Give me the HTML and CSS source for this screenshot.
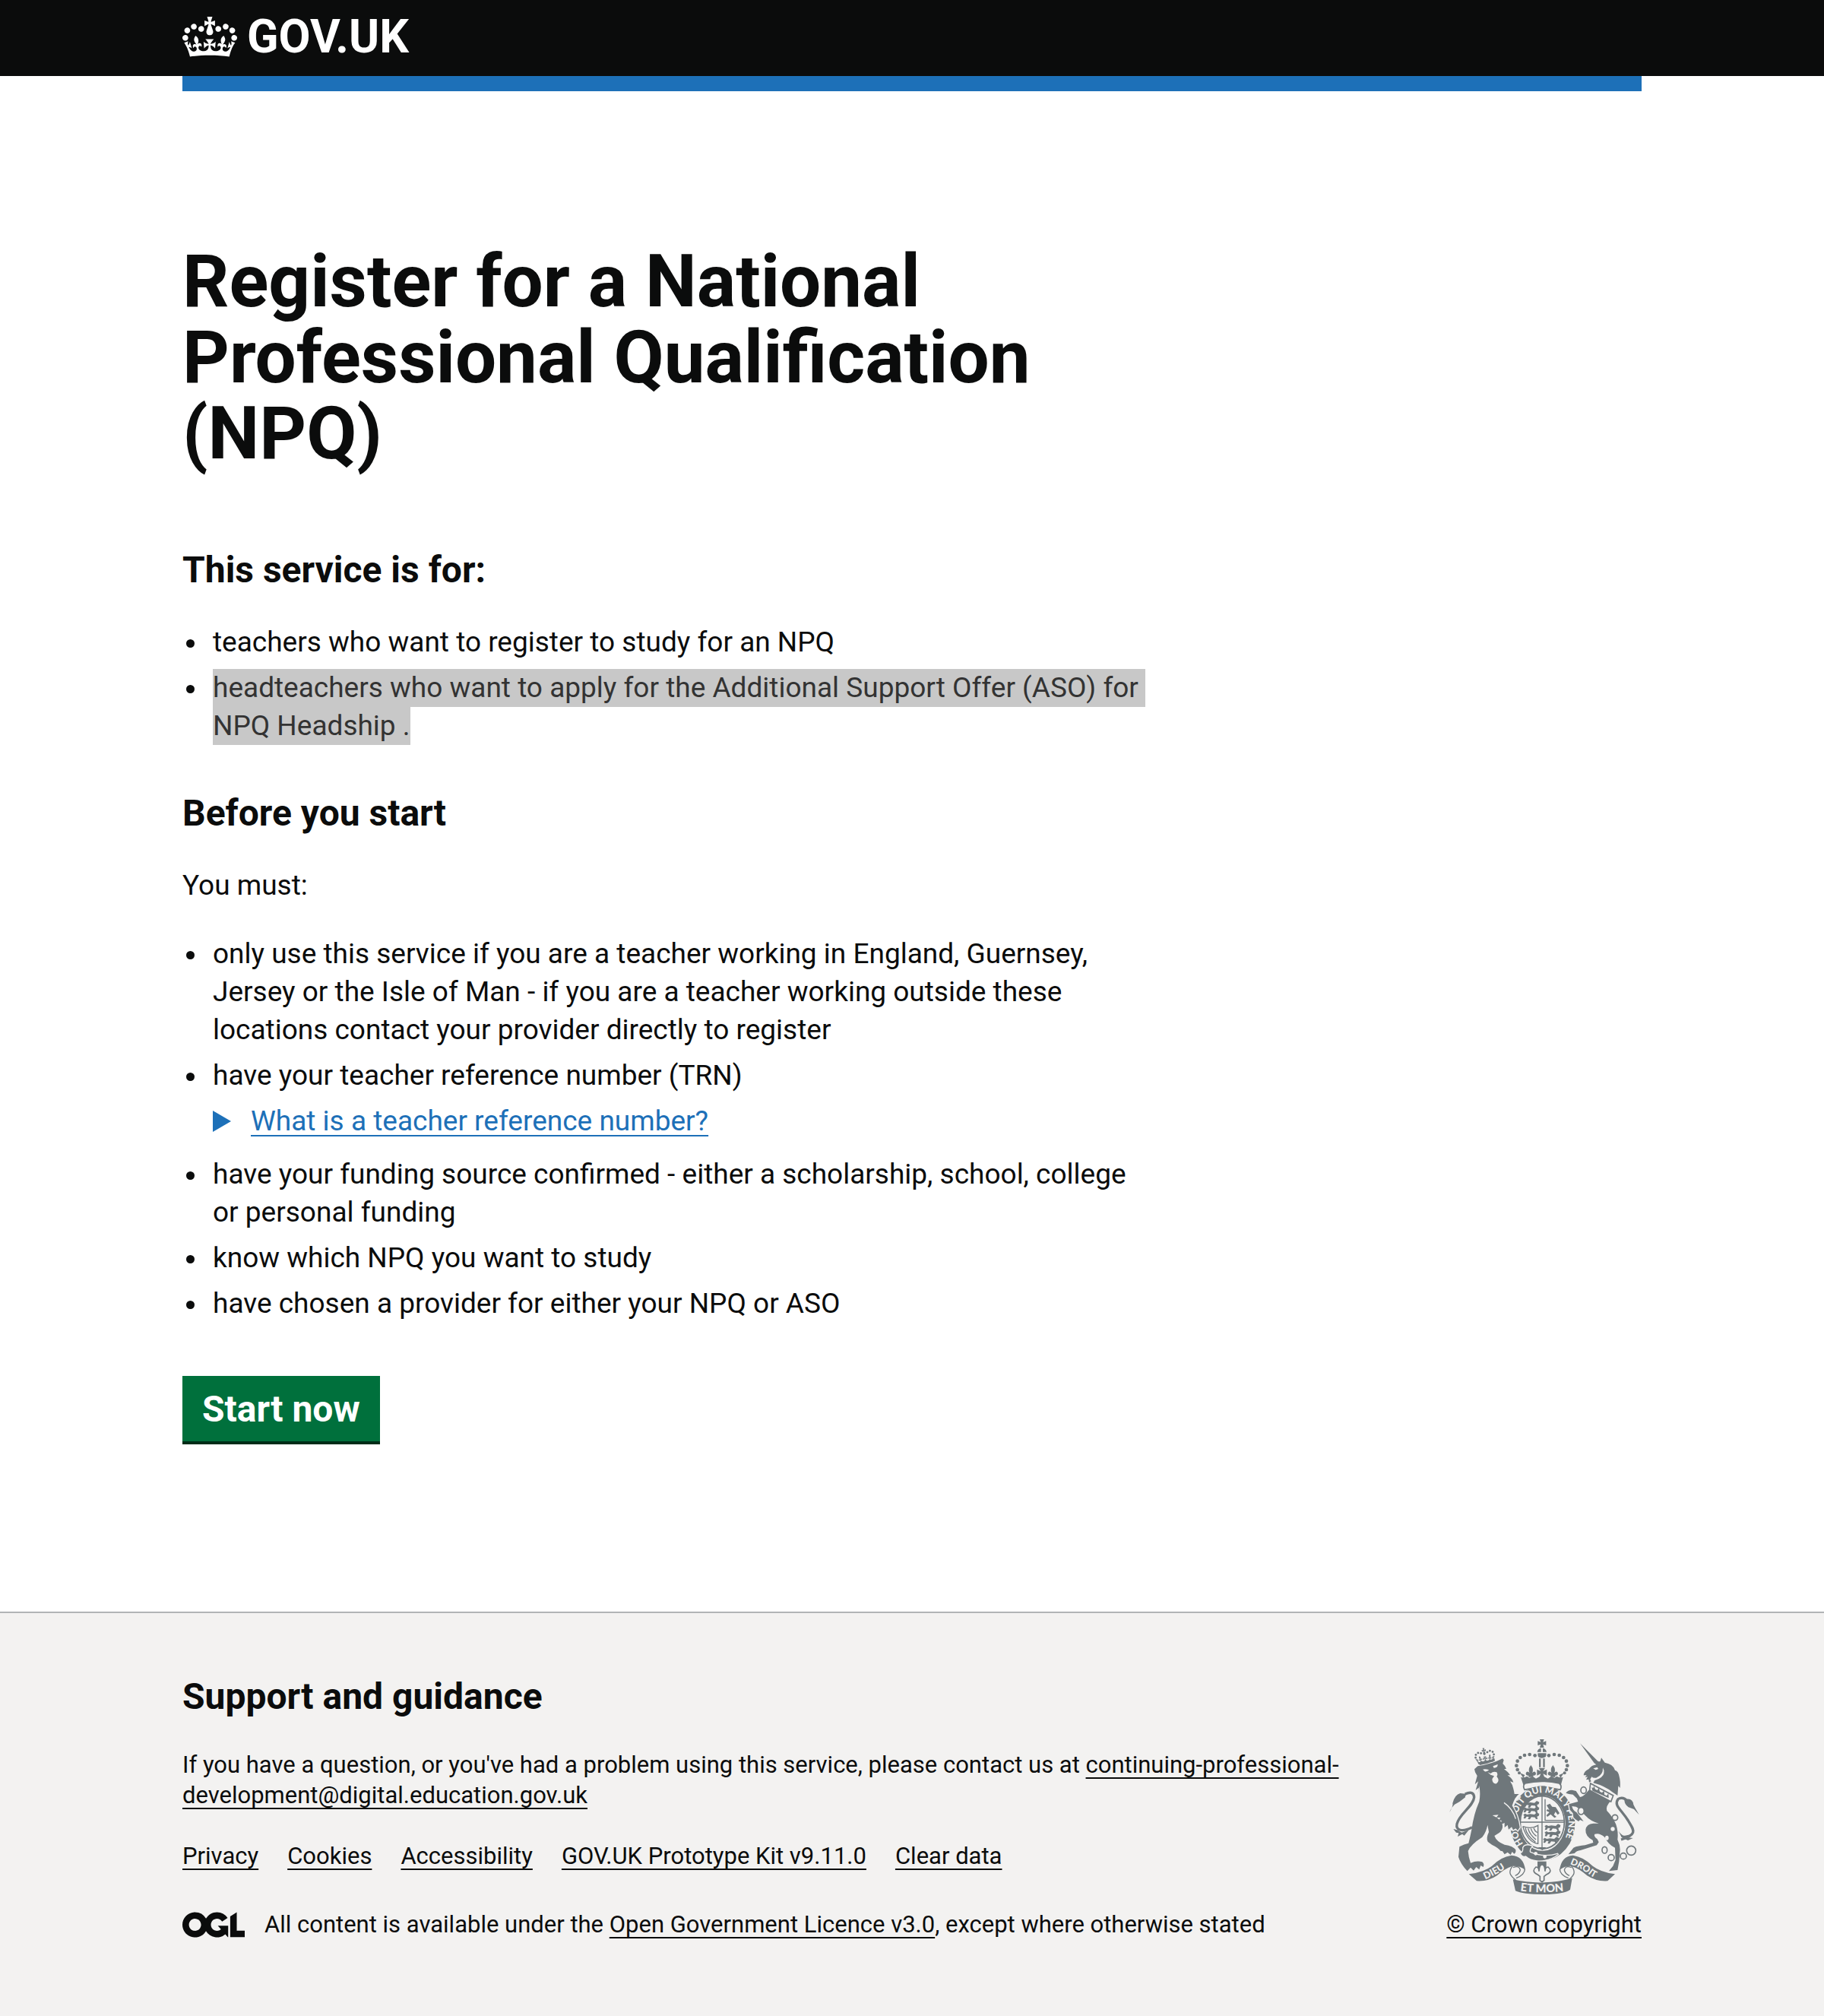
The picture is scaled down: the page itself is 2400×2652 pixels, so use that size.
FILE: index.html
```html
<!DOCTYPE html>
<html lang="en">
<head>
<meta charset="utf-8">
<meta name="viewport" content="width=device-width, initial-scale=1">
<title>Register for a National Professional Qualification (NPQ)</title>
<link rel="stylesheet" href="styles.css">
</head>
<body>
<header class="header">
  <div class="container">
    <div class="header-inner">
      <a class="logo" href="#">
        <svg class="logo-crown" viewBox="0 0 132 97" aria-hidden="true"><path id="crown-mark" fill="currentColor" fill-rule="evenodd" d="M25 30.2c3.5 1.5 7.7-.2 9.1-3.7 1.5-3.6-.2-7.8-3.9-9.2-3.6-1.4-7.6.3-9.1 3.9-1.4 3.5.3 7.5 3.9 9zM9 39.5c3.6 1.5 7.8-.2 9.2-3.7 1.5-3.6-.2-7.8-3.9-9.1-3.6-1.5-7.6.2-9.1 3.8-1.4 3.5.3 7.5 3.8 9zM4.4 57.2c3.5 1.5 7.7-.2 9.1-3.8 1.5-3.6-.2-7.7-3.9-9.1-3.5-1.5-7.6.3-9.1 3.8-1.4 3.5.3 7.6 3.9 9.1zm38.3-21.4c3.5 1.5 7.7-.2 9.1-3.8 1.5-3.6-.2-7.7-3.9-9.1-3.6-1.5-7.6.3-9.1 3.8-1.3 3.6.4 7.7 3.9 9.1zm64.4-5.6c-3.6 1.5-7.8-.2-9.1-3.7-1.5-3.6.2-7.8 3.8-9.2 3.6-1.4 7.7.3 9.2 3.9 1.3 3.5-.4 7.5-3.9 9zm15.9 9.3c-3.6 1.5-7.7-.2-9.1-3.7-1.5-3.6.2-7.8 3.7-9.1 3.6-1.5 7.7.2 9.2 3.8 1.5 3.5-.3 7.5-3.8 9zm4.7 17.7c-3.6 1.5-7.8-.2-9.2-3.8-1.5-3.6.2-7.7 3.9-9.1 3.6-1.5 7.7.3 9.2 3.8 1.3 3.5-.4 7.6-3.9 9.1zM89.3 35.8c-3.6 1.5-7.8-.2-9.2-3.8-1.4-3.6.2-7.7 3.9-9.1 3.6-1.5 7.7.3 9.2 3.8 1.4 3.6-.3 7.7-3.9 9.1zM69.7 17.7l8.9 4.7V9.3l-8.9 2.8c-.2-.3-.5-.6-.9-.9L72.4 0H59.6l3.5 11.2c-.3.3-.6.5-.9.9l-8.8-2.8v13.1l8.8-4.7c.3.3.6.7.9.9l-5 15.4v.1c-.2.8-.4 1.6-.4 2.4 0 4.1 3.1 7.5 7 8.1h.2c.3 0 .7.1 1 .1.4 0 .7 0 1-.1h.2c4-.6 7.1-4.1 7.1-8.1 0-.8-.1-1.7-.4-2.4V34l-5.1-15.4c.4-.2.7-.6 1-.9zM66 92.8c16.9 0 32.8 1.1 47.1 3.2 4-16.9 8.9-26.7 14-33.5l-9.6-3.4c1 4.9 1.1 7.2 0 10.2-1.5-1.4-3-4.3-4.2-8.7L108.6 76c2.8-2 5-3.2 7.5-3.3-4.4 9.4-10 11.9-13.6 11.2-4.3-.8-6.3-4.6-5.6-7.9 1-4.7 5.7-5.9 8-.5 4.3-8.7-3-11.4-7.6-8.8 7.1-7.2 7.9-13.5 2.1-21.1-8 6.1-8.1 12.3-4.5 20.8-4.7-5.4-12.1-2.5-9.5 6.2 3.4-5.2 7.9-2 7.2 3.1-.6 4.3-6.4 7.8-13.5 7.2-10.3-.9-10.9-8-11.2-13.8 2.5-.5 7.1 1.8 11 7.3L80.2 60c-4.1 4.4-8 5.3-12.3 5.4 1.4-4.4 8-11.6 8-11.6H55.5s6.4 7.2 7.9 11.6c-4.2-.1-8-1-12.3-5.4l1.4 16.4c3.9-5.5 8.5-7.7 10.9-7.3-.3 5.8-.9 12.8-11.1 13.8-7.2.6-12.9-2.9-13.5-7.2-.7-5 3.8-8.3 7.1-3.1 2.7-8.7-4.6-11.6-9.4-6.2 3.7-8.5 3.6-14.7-4.6-20.8-5.8 7.6-5 13.9 2.2 21.1-4.7-2.6-11.9.1-7.7 8.8 2.3-5.5 7.1-4.2 8.1.5.7 3.3-1.3 7.1-5.7 7.9-3.5.7-9-1.8-13.5-11.2 2.5.1 4.7 1.3 7.5 3.3l-4.7-15.4c-1.2 4.4-2.7 7.2-4.3 8.7-1.1-3-.9-5.3 0-10.2l-9.5 3.4c5 6.9 9.9 16.7 14 33.5 14.8-2.1 30.8-3.2 47.7-3.2z"/></svg>
        <span>GOV.UK</span>
      </a>
    </div>
  </div>
</header>

<div class="container">
  <div class="brand-bar"></div>
  <main class="main">
    <h1 class="title">Register for a National Professional Qualification (NPQ)</h1>

    <h2 class="heading">This service is for:</h2>
    <ul class="list">
      <li>teachers who want to register to study for an NPQ</li>
      <li><mark class="selected">headteachers who want to apply for the Additional Support Offer (ASO) for NPQ Headship .</mark></li>
    </ul>

    <h2 class="heading heading-spaced">Before you start</h2>
    <p class="body">You must:</p>
    <ul class="list">
      <li>only use this service if you are a teacher working in England, Guernsey, Jersey or the Isle of Man - if you are a teacher working outside these locations contact your provider directly to register</li>
      <li>have your teacher reference number (TRN)
        <details class="details">
          <summary class="summary"><span>What is a teacher reference number?</span></summary>
        </details>
      </li>
      <li>have your funding source confirmed - either a scholarship, school, college or personal funding</li>
      <li>know which NPQ you want to study</li>
      <li>have chosen a provider for either your NPQ or ASO</li>
    </ul>
    <button class="button" type="button">Start now</button>
  </main>
</div>

<footer class="footer">
  <div class="container footer-row">
    <div class="footer-text">
      <h2 class="heading">Support and guidance</h2>
      <p class="footer-body">If you have a question, or you've had a problem using this service, please contact us at <a href="#">continuing-professional-development@digital.education.gov.uk</a></p>
      <ul class="footer-links">
        <li><a href="#">Privacy</a></li>
        <li><a href="#">Cookies</a></li>
        <li><a href="#">Accessibility</a></li>
        <li><a href="#">GOV.UK Prototype Kit v9.11.0</a></li>
        <li><a href="#">Clear data</a></li>
      </ul>
      <div class="licence">
        <svg class="ogl" viewBox="0 0 483.2 195.7" role="img" aria-label="OGL"><path fill="currentColor" d="M421.5 142.8V.1l-50.7 32.3v161.1h112.4v-50.7zm-122.3-9.6A47.12 47.12 0 0 1 221 97.8c0-26 21.1-47.1 47.1-47.1 16.7 0 31.4 8.7 39.7 21.8l42.7-27.2A97.63 97.63 0 0 0 268.1 0c-36.5 0-68.3 20.1-85.1 49.7A98 98 0 0 0 97.8 0C43.9 0 0 43.9 0 97.8s43.9 97.8 97.8 97.8c36.5 0 68.3-20.1 85.1-49.7a97.76 97.76 0 0 0 149.6 25.4l19.4 22.2h3v-87.8h-80l24.3 27.5zM97.8 145c-26 0-47.1-21.1-47.1-47.1s21.1-47.1 47.1-47.1 47.1 21.1 47.1 47.1S123.8 145 97.8 145"/></svg>
        <span>All content is available under the <a href="#">Open Government Licence v3.0</a>, except where otherwise stated</span>
      </div>
    </div>
    <a class="copyright" href="#">
      <svg class="crest" viewBox="132 84 750 612" aria-hidden="true">
        <defs>
          <path id="garter-line" d="M424 496A103 120 0 1 1 566 507"/>
          <path id="dieu-line" d="M274 637Q332 612 382 572"/>
          <path id="mon-line" d="M412 682Q498 694 592 682"/>
          <path id="droit-line" d="M608 576Q660 596 690 622Q712 636 742 640"/>
          <path id="fleur" d="M0-26Q13-10 5 4Q16-6 20 6Q20 16 9 15L9 21H-9V15Q-20 16-20 6Q-16-6-5 4Q-13-10 0-26Z"/>
          <path id="passant" d="M-32-8l7-5 8 4 12-2 17 2 9-8 10 5-2 8-7 3 3 9-7 1-4-7-14-1-6 9-8-1 4-9-9-1-5 8-7-1 3-9z"/>
          <g id="half-crown">
            <circle cx="470" cy="148" r="7"/><circle cx="449" cy="144" r="7"/><circle cx="429" cy="147" r="7"/><circle cx="412" cy="156" r="7"/><circle cx="401" cy="170" r="7"/><circle cx="397" cy="188" r="7"/><circle cx="401" cy="204" r="7"/><circle cx="408" cy="217" r="6"/>
            <use href="#fleur" x="454" y="212"/>
            <path d="M411 217l19 8-6 12zM486 160h7v34h-7z"/>
          </g>
        </defs>
        <g class="crest-solid">
          <path d="M489 84h17l-4 11 12-4v17l-12-4 4 13h-17l4-13-12 4V91l12 4zM479 134q2-14 15-15v15zM501 119q13 1 15 15h-15zM482 139h32q5 18-17 19q-20-1-15-19z"/>
          <use href="#half-crown"/><use href="#half-crown" transform="translate(995 0) scale(-1 1)"/>
          <path d="M485 197h25l-8 13 15-7v24l-15-7 6 15h-21l6-15-15 7v-24l15 7z"/>
          <path d="M414 233q10 5 25-3l8 6 15-5 12 8 15-8 16 0 16 8 12-8 15 5 8-6q15 8 25 3l-9 33q-74-22-147 0z"/>
        </g>
        <path class="crest-open" d="M431 258q67-16 135 0 12 10 4 25-70-18-141 0-9-16 2-25z"/>
        <ellipse class="crest-ring" cx="500" cy="415" rx="109" ry="128"/>
        <ellipse class="crest-open" cx="499" cy="412" rx="87" ry="104"/>
        <g class="crest-solid">
          <use href="#passant" transform="translate(456 344)"/><use href="#passant" transform="translate(456 366)"/><use href="#passant" transform="translate(456 390)"/>
          <use href="#passant" transform="translate(540 435)"/><use href="#passant" transform="translate(540 460)"/><use href="#passant" transform="translate(534 486)"/>
          <path d="M516 344l13-6 9 12 14 2 15 24-7 6-9-12-6 12 10 8-8 4-15-14-13 10-4-6 12-12-12-6 4-6 8 3z"/>
          <path d="M481 510h34l-16 12z"/>
        </g>
        <path class="crest-thin" d="M422 428q35 12 60-4v72q-40-5-60-68M432 434q5 30 40 56M443 436q6 24 31 44M454 436q5 18 22 30M465 434q4 12 14 18M510 320v84h74M498 308v208M411 411h177"/>
        <text class="crest-letters" font-size="36"><textPath href="#garter-line">HONI SOIT QUI MAL Y PENSE</textPath></text>
        <path class="crest-paw" d="M424 512q8-16 34-6-12 12-8 24 54 24 112 6-34 28-84 26-26-2-44-18-14 4-20-10 12-4 10-22z"/>
        <path class="crest-paw" d="M231 202L244 190Q300 182 342 160L347 166L343 180Q352 188 357 200L348 202Q366 214 372 226L362 226Q382 240 385 254L372 250Q382 264 384 276Q388 290 389 300L407 300Q390 312 380 346Q404 385 410 432L402 444L394 436L384 442L378 430L366 440L362 422L350 432L350 414L336 420L338 404L326 404L334 394L318 392L326 382L302 384Q335 398 342 422Q344 440 330 452L310 465Q318 488 350 500Q385 505 394 520Q396 532 388 536L380 528L374 540L362 530L350 538L342 526L334 524Q325 512 300 500L284 488Q276 475 288 450L283 422Q278 450 262 470Q215 500 206 525Q208 550 216 572Q240 562 262 568Q272 576 266 588L256 582L250 598L238 588L228 602L216 590L203 604Q176 575 168 548L172 508Q190 498 208 494Q214 470 220 440Q228 380 250 330Q256 300 250 268L244 305L248 275L236 285L246 250L233 262L242 228L234 214Z"/>
        <path class="crest-paw" d="M683 284L770 326Q748 348 754 366Q776 388 790 420Q800 450 796 480Q806 500 806 520L802 566L796 600L762 604L778 584L788 560L786 512Q760 500 745 470Q725 452 706 458Q700 465 716 478L722 490L714 502L650 522Q634 524 626 534L602 538L622 512Q640 504 668 502L700 492L698 482Q668 466 670 440Q674 418 700 416L722 416Q690 408 668 384Q640 352 632 350L616 348Q620 366 634 372L650 392L662 408L648 402L642 408L630 400L622 392L620 376L608 362L604 340L640 330L636 318L620 302L604 300L592 296Q600 284 616 284L632 288L648 312Q660 310 672 296Z"/>
        <g class="crest-solid">
          <path d="M133 372q15-26 12-36 9-34 30-39l29 3q-11 6-9 13-20 18-42 28-17 18-20 31z"/>
          <path class="crest-line" d="M194 300q35-15 36 13c-3 35-60 66-68 105c-5 25 20 34 60 13"/>
          <path d="M148 438l15 4 18 10 28-10-18 22-8-6-18 10 4-14-10-2z"/>
          <use href="#crown-mark" color="#6f777b" transform="translate(226 126) rotate(-10) scale(.62)"/>
          <path d="M248 176q34-4 62-17l2 10q-28 12-60 17z"/>
          <path d="M648 100L716 168Q722 174 728 170L732 157L746 176Q780 182 786 206Q800 210 803 232Q808 250 806 276L799 268L796 306L775 292Q745 268 700 256L706 246Q740 235 742 218Q744 205 738 196Q740 225 712 236Q700 238 694 232L688 242L692 250L684 254L682 242L672 244L678 232L668 234L674 226L662 226Q664 210 682 202Q694 186 712 184L704 178Z"/>
          <path class="crest-line" d="M810 480C880 458 858 440 838 405C810 360 780 345 798 320Q818 308 837 330"/>
          <path d="M831 320q25-4 28 22l6 12 16 28-20-22-22-8q-15-10-16-28zM800 446q14 20 25 18l30-6-16 14 18 2-20 9-25-12z"/>
          <path d="M209 616Q270 608 300 584Q335 548 377 542Q425 544 432 600Q415 584 382 584Q350 594 320 622Q285 646 240 643ZM786 616Q728 608 698 584Q662 548 620 542Q575 544 567 600Q585 584 612 584Q646 594 676 622Q712 646 757 643ZM383 637q114 27 234-5l-8 45q-25 19-109 19-79 0-107-14z"/>
          <path class="crest-thin" d="M382 584c-20 26-9 38 12 56M430 596q0 22-34 36M614 584c20 26 9 38-12 56M568 596q0 22 34 36M384 590q24-10 28 10q-4 16-20 22M614 590q-24-10-28 10q4 16 20 22"/>
          <path d="M480 566h35v32h-35z"/>
        </g>
        <g class="crest-open">
          <path d="M474 588q12 0 12 17 1-25 12-27 11 2 12 27 0-17 12-17 20 18-7 30l-9 7v16l-8 6-8-6v-16l-9-7q-27-12-7-30z"/>
          <ellipse cx="662" cy="285" rx="11" ry="13"/><ellipse cx="652" cy="367" rx="12" ry="14"/><circle cx="786" cy="393" r="11"/><ellipse cx="745" cy="521" rx="10" ry="13"/><circle cx="771" cy="551" r="12"/><circle cx="819" cy="545" r="12"/><circle cx="850" cy="523" r="18"/>
          <path d="M689 258l90 48-9 24-84-45z"/>
        </g>
        <g class="crest-light">
          <circle cx="473" cy="535" r="7"/><circle cx="509" cy="547" r="7"/><ellipse cx="777" cy="438" rx="8" ry="8"/><ellipse cx="754" cy="473" rx="7" ry="9"/>
          <path d="M264 203q10-4 25 2-8 8-17 6zM304 190l19-7q1 13-15 14zM283 214l12 5q12-11 24-5 6 9 0 16 14 18-1 29-16 2-17-18l8-12-14-5zM700 199l16-5 4 7-10 4z"/>
          <path class="crest-cut" d="M348 334q35 25 46 64"/>
        </g>
        <path class="crest-solid" d="M694 273l6 4 3-9 5 13 9 4 5-11 4 16 9 5 8-9 1 16 9 5 7-10 1 19-64-29z"/>
        <g class="crest-letters">
          <text font-size="38"><textPath href="#dieu-line">DIEU</textPath></text>
          <text font-size="44"><textPath href="#mon-line">ET MON</textPath></text>
          <text font-size="36"><textPath href="#droit-line">DROIT</textPath></text>
        </g>
      </svg>
      <span>© Crown copyright</span>
    </a>
  </div>
</footer>
</body>
</html>
```
FILE: styles.css
```css
* {
  box-sizing: border-box;
}

body {
  margin: 0;
  background: #fff;
  color: #0b0c0c;
  font-family: Roboto, "Liberation Sans", sans-serif;
  font-size: 37px;
  line-height: 50px;
}

h1,
h2,
p,
ul {
  margin: 0;
  padding: 0;
}

a {
  color: inherit;
  text-decoration: underline;
  text-decoration-thickness: 2px;
  text-underline-offset: 6px;
  text-decoration-skip-ink: none;
}

.container {
  width: 80%;
  margin: 0 auto;
}

.header {
  background: #0b0c0c;
  color: #fff;
}

.header-inner {
  display: flex;
  align-items: center;
  height: 100px;
  padding-bottom: 4px;
}

.logo {
  display: flex;
  align-items: center;
  gap: 13px;
  font-size: 61px;
  font-weight: 700;
  line-height: 60px;
  text-decoration: none;
}

.logo-crown {
  width: 72px;
  height: 53px;
}

.brand-bar {
  height: 20px;
  background: #1d70b8;
}

.main {
  width: 66%;
  padding: 200px 0 220px;
}

.title {
  margin-bottom: 100px;
  font-size: 96px;
  font-weight: 700;
  line-height: 100px;
}

.heading {
  margin-bottom: 40px;
  font-size: 48px;
  font-weight: 700;
  line-height: 60px;
}

.heading-spaced {
  margin-top: 60px;
}

.body {
  margin-bottom: 40px;
}

.list {
  display: grid;
  gap: 10px;
  padding-left: 34px;
}

.list > li {
  padding-left: 6px;
}

.selected {
  padding: 3px 0 4px;
  background: #c8c8c8;
  color: #333;
  white-space: pre-wrap;
}

.details {
  margin: 10px 0;
  color: #1d70b8;
}

.summary {
  display: flex;
  align-items: center;
  gap: 26px;
  width: max-content;
  list-style: none;
  text-decoration: underline;
  text-decoration-thickness: 2px;
  text-underline-offset: 6px;
  text-decoration-skip-ink: none;
}

.summary::before {
  content: "";
  width: 24px;
  height: 28px;
  background: currentColor;
  clip-path: polygon(0 0, 100% 50%, 0 100%);
}

.button {
  display: block;
  height: 90px;
  margin-top: 70px;
  padding: 0 26px 2px;
  border: 0;
  border-radius: 0;
  background: #00703c;
  box-shadow: inset 0 -4px 0 #002d18;
  color: #fff;
  font: inherit;
  font-size: 48px;
  font-weight: 700;
  line-height: 60px;
}

.footer {
  padding: 80px 0 100px;
  border-top: 2px solid #b1b4b6;
  background: #f3f2f1;
  font-size: 31px;
  line-height: 40px;
}

.footer-row {
  display: flex;
  align-items: flex-end;
  justify-content: space-between;
}

.footer-text {
  width: 82%;
}

.footer-body {
  max-width: 1540px;
  margin-bottom: 40px;
}

.footer-links {
  display: flex;
  gap: 38px;
  margin-bottom: 50px;
  list-style: none;
}

.licence {
  display: flex;
  align-items: center;
  gap: 26px;
}

.ogl {
  width: 82px;
  height: 34px;
}

.copyright {
  display: flex;
  flex-direction: column;
  align-items: center;
  gap: 20px;
}

.crest {
  width: 250px;
  height: 204px;
}

.crest-solid {
  fill: #6f777b;
}

.crest-light {
  fill: #f3f2f1;
}

.crest-open {
  fill: #f3f2f1;
  stroke: #6f777b;
  stroke-width: 5;
}

.crest-paw {
  fill: #6f777b;
  stroke: #f3f2f1;
  stroke-width: 8;
  paint-order: stroke;
}

.crest-line {
  fill: none;
  stroke: #6f777b;
  stroke-width: 10;
}

.crest-thin {
  fill: none;
  stroke: #6f777b;
  stroke-width: 4;
}

.crest-cut {
  fill: none;
  stroke: #f3f2f1;
  stroke-width: 4;
}

.crest-ring {
  fill: #f3f2f1;
  stroke: #6f777b;
  stroke-width: 38;
}

.crest-letters {
  fill: #f3f2f1;
  font-family: Lato, sans-serif;
  font-weight: 900;
}
```
